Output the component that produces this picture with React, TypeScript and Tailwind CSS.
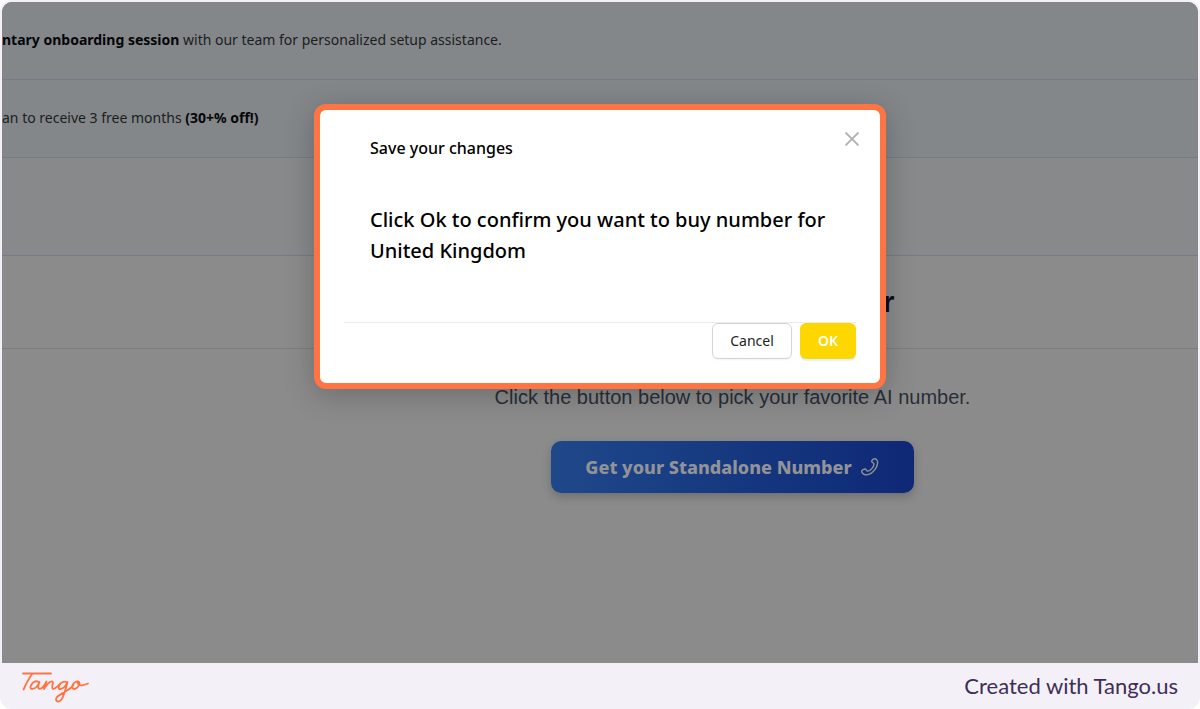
import React from "react";

function TangoLogo() {
  return (
    <svg
      role="img"
      aria-label="Tango"
      className="h-9 w-18"
      viewBox="0 0 72 36"
      fill="none"
      stroke="#ff7442"
      strokeWidth="1.8"
      strokeLinecap="round"
      strokeLinejoin="round"
    >
      <path d="M5 5.500H33" />
      <path d="M14 6C11.500 9.500 8.500 15 5.500 21.500" />
      <path d="M21 14.500C19 12 15.500 13.500 13.500 16.500C12 19 12 21 14 21C17 21 20 17.500 21.500 14C20 18 19.500 20.500 21.500 20.800C24 21 26.500 17.500 28.500 13.500L26 21C28.500 17 31.500 13 34 13.300C36.500 13.500 33 19 34.500 20.700C36.500 22 39.500 18.500 41.500 16.500" />
      <path d="M49 15C47.500 12.500 43.500 13.700 41.700 16.500C40 19.500 40.500 21.500 42.500 21C45.500 20.500 48 17.500 49.500 14C47.500 21 46 28.500 43 32C40.500 34.800 37.500 33.300 38.200 30.500C39.500 26 50.500 24 55.500 17" />
      <path d="M60 13.500C57 13 54.500 16 54.200 18.500C54 21.300 56.500 21.800 59 19.800C61.500 17.500 62.500 14 60 13.500C58.500 15 61 18 64 17.300C66.500 16.800 68.500 16.200 70 15.500" />
    </svg>
  );
}

function PhoneIcon() {
  return (
    <svg
      aria-hidden="true"
      className="size-5"
      viewBox="0 0 20 20"
      fill="none"
      stroke="currentColor"
      strokeWidth="1.4"
      strokeLinejoin="round"
    >
      <path d="M12.200 3.200C13 1.800 15 1.200 16.300 2.300C18.500 4.300 17.800 8.600 15.200 12.200C12.500 16 8.500 18.300 5.300 17.800C3.500 17.500 1.600 15.700 1.700 14.300C1.800 13.200 4.200 11.700 5.300 12C6.300 12.300 6.400 14 7.500 14.100C9 14.200 11 12.700 12.200 11.100C13.400 9.500 14.300 7.700 13.800 6.600C13.400 5.700 11.700 5.200 11.700 4.500C11.700 4 11.900 3.600 12.200 3.200Z" />
    </svg>
  );
}

function SaveDialog() {
  return (
    <div
      role="dialog"
      aria-labelledby="dialog-title"
      className="absolute inset-x-0 top-[102px] mx-auto w-full max-w-[572px] rounded-xl border-6 border-[#ff7442] bg-white p-6 text-black shadow-[0_6px_30px_rgba(0,0,0,0.22)]"
    >
      <button
        type="button"
        aria-label="Close"
        className="absolute top-5 right-5 text-[#b3b3b3]"
      >
        <svg className="size-4" viewBox="0 0 16 16" fill="none" stroke="currentColor" strokeWidth="1.8">
          <path d="M1.500 2.500L14.500 15.500M14.500 2.500L1.500 15.500" />
        </svg>
      </button>
      <h2 id="dialog-title" className="px-[26px] pt-[2px] text-base leading-6 font-medium">
        Save your changes
      </h2>
      <p className="px-[26px] pt-11 pb-14 text-xl leading-[31px] font-medium">
        Click Ok to confirm you want to buy number for United Kingdom
      </p>
      <div className="flex justify-end gap-2 border-t border-[#ececec]">
        <button
          type="button"
          className="h-9 w-20 rounded-md border border-[#d4d4d4] bg-white text-sm text-[#222222] shadow-xs"
        >
          Cancel
        </button>
        <button
          type="button"
          className="h-9 w-14 rounded-md bg-[#ffd700] text-sm font-semibold text-white shadow-[0_2px_1px_#e0f2ff]"
        >
          OK
        </button>
      </div>
    </div>
  );
}

export default function App() {
  return (
    <div className="overflow-hidden bg-white font-['Noto_Sans','Open_Sans',sans-serif]">
      <div className="flex min-h-screen flex-col rounded-xl bg-[#f3f1f7] px-[2px] pt-[2px]">
        <main className="relative flex grow flex-col overflow-hidden rounded-t-[10px] bg-[#8b8b8b] text-sm text-[#1b1d20]">
          <p className="flex h-[78px] items-center border-b border-[#777b87] bg-[#838789] pb-[2px] whitespace-pre">
            <strong className="text-[#050608]">ntary onboarding session</strong> with our team for personalized setup assistance.
          </p>
          <p className="flex h-[78px] items-center border-b border-[#777b87] bg-[#838789] pb-[2px] whitespace-pre">
            an to receive 3 free months <strong className="text-[#050608]">(30+% off!)</strong>
          </p>
          <div className="h-[98px] border-b border-[#777b87] bg-[#87898a]" />
          <header className="flex h-[93px] items-center justify-center border-b border-[#7c7d83] pl-[265px]">
            <h1 className="w-[324px] text-right font-['Liberation_Sans',sans-serif] text-3xl font-bold text-[#080d17]">
              r
            </h1>
          </header>
          <section className="flex flex-col items-center gap-8 pt-9 pl-[265px]">
            <p className="font-['Liberation_Sans',sans-serif] text-xl leading-6 text-[#292e37]">
              Click the button below to pick your favorite AI number.
            </p>
            <button
              type="button"
              className="flex items-center justify-center gap-2 rounded-[10px] bg-linear-to-r from-[#1f488a] to-[#0f2876] px-[34px] py-3 text-lg leading-7 font-extrabold text-[#929396] shadow-[0_4px_10px_rgba(0,0,0,0.2)]"
            >
              Get your Standalone Number
              <PhoneIcon />
            </button>
          </section>
          <SaveDialog />
        </main>
        <footer className="flex h-[46px] items-center justify-between px-4">
          <TangoLogo />
          <p className="pr-1 font-['Lato',sans-serif] text-[22px] leading-7 text-[#3f2e56]">Created with Tango.us</p>
        </footer>
      </div>
    </div>
  );
}
